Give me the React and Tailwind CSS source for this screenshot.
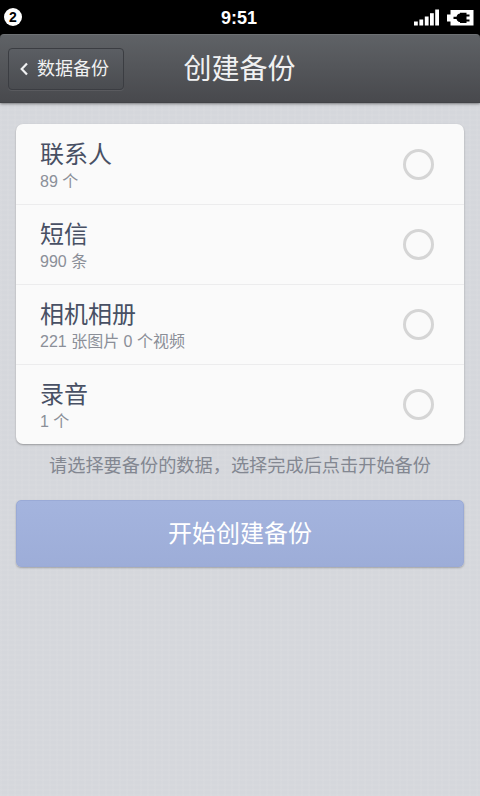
import { useState } from 'react'

const ITEMS = [
  { id: 'contacts', name: '联系人', count: '89 个' },
  { id: 'sms', name: '短信', count: '990 条' },
  { id: 'camera', name: '相机相册', count: '221 张图片 0 个视频' },
  { id: 'records', name: '录音', count: '1 个' },
]

function SignalIcon() {
  return (
    <svg width="26" height="17" viewBox="0 0 26 17" fill="#fff">
      <rect x="0" y="12.5" width="3.8" height="4" />
      <rect x="5.4" y="10.5" width="3.8" height="6" />
      <rect x="10.8" y="7.5" width="3.8" height="9" />
      <rect x="16" y="4.2" width="3.8" height="12.3" />
      <rect x="21.2" y="0.5" width="3.8" height="16" />
    </svg>
  )
}

function BatteryIcon() {
  return (
    <svg width="27" height="17" viewBox="0 0 27 17">
      <path d="M3.500 1h23v15.500h-23v-4H0V5.500h3.500z" fill="#fff" />
      <path d="M6.500 7.700h3C10.200 5.500 11.500 4.800 13 4.600V3.800h6.500v1.700H22.500v2h-3v3h3v2h-3v1.400H13v-.8c-1.500-.2-2.800-1-3.500-3.200h-3z" fill="#000" />
    </svg>
  )
}

function StatusBar() {
  return (
    <div className="grid h-[34px] grid-cols-3 items-center bg-black text-white">
      <span className="ml-1 flex size-[18px] items-center justify-center rounded-full bg-white text-[14px] leading-none font-bold text-black">
        2
      </span>
      <span className="pt-0.5 pr-0.5 text-center text-[18px] leading-8 font-bold">9:51</span>
      <div className="flex items-center justify-end gap-[7px] pr-[6px]">
        <SignalIcon />
        <BatteryIcon />
      </div>
    </div>
  )
}

function Header() {
  return (
    <div className="bg-black">
      <header className="grid h-[69px] grid-cols-[1fr_auto_1fr] items-center rounded-t-[4px] border-t border-b border-t-[#6d7073] border-b-[#424347] bg-linear-to-b from-[#5f6266] to-[#48494d] px-2 text-[#f0f1f2] shadow-[0_1px_3px_rgba(0,0,0,0.45)]">
        <button className="flex h-[42px] w-[116px] items-center rounded-[4px] border border-[#3b3d42] bg-linear-to-b from-[#5b5e63] to-[#4a4c50] pl-[11px] text-[18px] shadow-[0_1px_0_rgba(255,255,255,0.08)]">
          <svg width="8" height="14" viewBox="0 0 8 14" fill="none" stroke="currentColor" strokeWidth="2.200" className="mr-[9px]">
            <path d="M7 1.500L1.700 7L7 12.500" />
          </svg>
          <span className="pt-0.5">数据备份</span>
        </button>
        <h1 className="-ml-px pt-[3px] text-[28px] leading-none">创建备份</h1>
      </header>
    </div>
  )
}

export default function App() {
  const [selected, setSelected] = useState([])

  const toggle = (id) =>
    setSelected((prev) => (prev.includes(id) ? prev.filter((x) => x !== id) : [...prev, id]))

  return (
    <div className="flex h-[796px] w-[480px] flex-col overflow-hidden bg-[#d5d7dc] bg-[repeating-linear-gradient(0deg,rgba(255,255,255,0.04)_0px_2px,transparent_2px_5px),repeating-linear-gradient(90deg,rgba(255,255,255,0.04)_0px_2px,transparent_2px_7px)] font-['Liberation_Sans','Noto_Sans_CJK_SC',sans-serif]">
      <StatusBar />
      <Header />

      <main className="px-4 pt-[21px]">
        <ul className="overflow-hidden rounded-[7px] bg-[#fafafa] shadow-[0_1px_2px_rgba(0,0,0,0.3)]">
          {ITEMS.map((item) => (
            <li
              key={item.id}
              onClick={() => toggle(item.id)}
              className="flex h-20 items-center justify-between border-t border-[#ececed] pr-[30px] pl-6 first:border-t-0"
            >
              <div className="pt-[5px]">
                <div className="text-[24px] leading-[30px] text-[#485064]">{item.name}</div>
                <div className="text-[16px] leading-6 text-[#8b8f98]">{item.count}</div>
              </div>
              <span className="flex size-[31px] items-center justify-center rounded-full border-[3px] border-[#d5d5d5]">
                {selected.includes(item.id) && <span className="size-4 rounded-full bg-[#9fb0dc]" />}
              </span>
            </li>
          ))}
        </ul>

        <p className="mt-2 text-center text-[18.200px] leading-7 whitespace-nowrap text-[#838791]">
          请选择要备份的数据，选择完成后点击开始备份
        </p>

        <button className="mt-5 h-[67px] w-full rounded-[5px] border border-[#9aaad6] bg-linear-to-b from-[#a4b4de] to-[#9dadd8] text-[24px] text-white shadow-[0_1px_2px_rgba(0,0,0,0.25)]">
          开始创建备份
        </button>
      </main>
    </div>
  )
}
